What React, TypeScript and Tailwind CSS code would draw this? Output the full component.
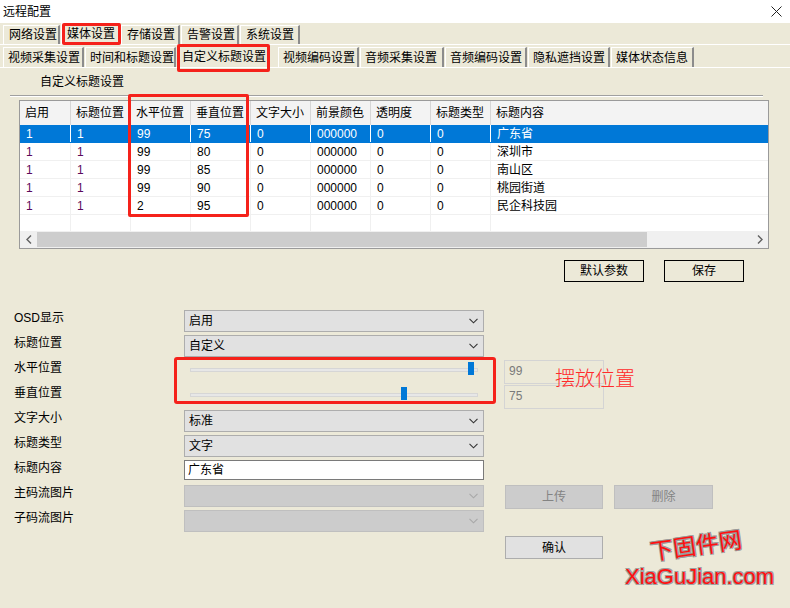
import React from "react";

// Remote config dialog — custom OSD title page

const topTabs = [
  { label: "网络设置", w: "w-[57px]" },
  { label: "媒体设置", w: "w-[59px]", active: true },
  { label: "存储设置", w: "w-[59px]" },
  { label: "告警设置", w: "w-[58px]" },
  { label: "系统设置", w: "w-[60px]" },
];

const subTabs = [
  { label: "视频采集设置", w: "w-[81px]" },
  { label: "时间和标题设置", w: "w-[91px]" },
  { label: "自定义标题设置", w: "w-[92px]", active: true },
  { label: "视频编码设置", w: "w-[81px]" },
  { label: "音频采集设置", w: "w-[84px]" },
  { label: "音频编码设置", w: "w-[82px]" },
  { label: "隐私遮挡设置", w: "w-[82px]" },
  { label: "媒体状态信息", w: "w-[83px]" },
];

const columns = ["启用", "标题位置", "水平位置", "垂直位置", "文字大小", "前景颜色", "透明度", "标题类型", "标题内容"];

const rows = [
  ["1", "1", "99", "75", "0", "000000", "0", "0", "广东省"],
  ["1", "1", "99", "80", "0", "000000", "0", "0", "深圳市"],
  ["1", "1", "99", "85", "0", "000000", "0", "0", "南山区"],
  ["1", "1", "99", "90", "0", "000000", "0", "0", "桃园街道"],
  ["1", "1", "2", "95", "0", "000000", "0", "0", "民企科技园"],
];

const gridCols = "grid grid-cols-[51px_60px_60px_60px_60px_60px_60px_60px_1fr]";

function Chevron({ color = "#333" }: { color?: string }) {
  return (
    <svg width="9" height="6" viewBox="0 0 9 6" className="shrink-0">
      <polyline points="0.5,0.8 4.5,4.8 8.5,0.8" fill="none" stroke={color} strokeWidth="1.1" />
    </svg>
  );
}

function Select({ value, disabled }: { value?: string; disabled?: boolean }) {
  return (
    <div
      className={`w-[300px] h-[22px] flex items-center justify-between pl-[4px] pr-[5px] border ${
        disabled ? "bg-[#cccccc] border-[#bfbfbf]" : "bg-[#e1e1e1] border-[#adadad]"
      }`}
    >
      <span className="text-black">{value}</span>
      <Chevron color={disabled ? "#a8a8a8" : "#333"} />
    </div>
  );
}

function Slider({ value }: { value: number }) {
  return (
    <div className="w-[300px] h-[25px] pl-[6px] pt-[8px]">
      <div className="relative w-[288px] h-[4px] bg-[#e7e7e7] border border-[#d6d6d6]">
        <div
          className="absolute top-[-7px] w-[6px] h-[13px] bg-[#0078d7]"
          style={{ left: `${(value / 100) * 280}px` }}
        />
      </div>
    </div>
  );
}

function Label({ children }: { children: React.ReactNode }) {
  return <div className="w-[170px] leading-[16px] text-black">{children}</div>;
}

export default function App() {
  return (
    <div
      className="relative w-[790px] h-[608px] overflow-hidden bg-[#ECE9D8] text-[12px] text-black"
      style={{ fontFamily: '"Liberation Sans", "Noto Sans CJK SC", sans-serif' }}
    >
      {/* ── Title bar ───────────────────────────────────────── */}
      <div className="h-[23px] bg-white flex items-center justify-between pl-[3px] pr-[8px]">
        <span className="leading-[14px]">远程配置</span>
        <svg width="11" height="11" viewBox="0 0 11 11">
          <path d="M0.5 0.5 L10.5 10.5 M10.5 0.5 L0.5 10.5" stroke="#222" strokeWidth="1" />
        </svg>
      </div>

      {/* ── Top tabs ────────────────────────────────────────── */}
      <div className="h-[22px] flex items-end pl-[3px] gap-[1px] border-b border-white">
        {topTabs.map((t) => (
          <div
            key={t.label}
            className={`${t.w} ${t.active ? "h-[21px]" : "h-[19px]"} flex items-center pl-[5px] border-l border-t border-white border-r-2 border-r-[#8c8c8c] leading-[14px]`}
          >
            {t.label}
          </div>
        ))}
      </div>

      {/* ── Sub tabs ────────────────────────────────────────── */}
      <div className="h-[23px] flex items-end pl-[3px] gap-[1px] border-b border-white">
        {subTabs.map((t) => (
          <div
            key={t.label}
            className={`${t.w} ${t.active ? "h-[22px]" : "h-[20px]"} ${t.active ? "mr-[8px]" : ""} flex items-center pl-[4px] border-l border-t border-white border-r-2 border-r-[#8c8c8c] leading-[14px]`}
          >
            {t.label}
          </div>
        ))}
      </div>

      {/* ── Group caption ───────────────────────────────────── */}
      <div className="pl-[40px] pt-[7px] leading-[14px]">自定义标题设置</div>
      <div className="ml-[10px] mt-[6px] w-[753px] border-t border-[#a0a0a0] border-b border-b-white" />

      {/* ── List view ───────────────────────────────────────── */}
      <div className="ml-[19px] mt-[3px] w-[750px] border border-[#9a9a9a] bg-white">
        <div className={`${gridCols} h-[24px] bg-[#f3f3f3]`}>
          {columns.map((c, i) => (
            <div
              key={c}
              className={`flex items-center pl-[5px] leading-[14px] ${i < columns.length - 1 ? "border-r border-[#d6d6d6]" : ""}`}
            >
              {c}
            </div>
          ))}
        </div>
        {rows.map((r, ri) => {
          const sel = ri === 0;
          return (
            <div
              key={ri}
              className={`${gridCols} h-[18px] border-b ${sel ? "bg-[#0078d7] text-white border-[#0078d7]" : "border-[#f0f0f0]"}`}
            >
              {r.map((v, ci) => (
                <div
                  key={ci}
                  className={`flex items-center pl-[6px] leading-[14px] ${
                    ci < r.length - 1 ? (sel ? "border-r border-white" : "border-r border-[#f0f0f0]") : ""
                  } ${!sel && ci < 2 ? "text-[#5c0a5c]" : ""}`}
                >
                  {v}
                </div>
              ))}
            </div>
          );
        })}
        <div className={`${gridCols} h-[16px]`}>
          {columns.map((c, i) => (
            <div key={c} className={i < columns.length - 1 ? "border-r border-[#f0f0f0]" : ""} />
          ))}
        </div>
        {/* horizontal scrollbar */}
        <div className="h-[17px] flex bg-[#f0f0f0]">
          <div className="w-[17px] flex items-center justify-center">
            <svg width="6" height="9" viewBox="0 0 6 9">
              <polyline points="5,0.5 1,4.5 5,8.5" fill="none" stroke="#606060" strokeWidth="1.4" />
            </svg>
          </div>
          <div className="w-[610px] my-[1px] bg-[#cdcdcd]" />
          <div className="flex-1" />
          <div className="w-[17px] flex items-center justify-center">
            <svg width="6" height="9" viewBox="0 0 6 9">
              <polyline points="1,0.5 5,4.5 1,8.5" fill="none" stroke="#606060" strokeWidth="1.4" />
            </svg>
          </div>
        </div>
      </div>

      {/* ── Action buttons ──────────────────────────────────── */}
      <div className="mt-[11px] ml-[564px] flex gap-[20px]">
        <button className="w-[80px] h-[22px] border border-black flex items-center justify-center leading-[14px]">
          默认参数
        </button>
        <button className="w-[80px] h-[22px] border border-black flex items-center justify-center leading-[14px]">
          保存
        </button>
      </div>

      {/* ── Form ────────────────────────────────────────────── */}
      <div className="mt-[28px] pl-[14px] flex flex-col">
        <div className="h-[25px] flex">
          <Label>OSD显示</Label>
          <Select value="启用" />
        </div>
        <div className="h-[25px] flex">
          <Label>标题位置</Label>
          <Select value="自定义" />
        </div>
        <div className="h-[25px] flex">
          <Label>水平位置</Label>
          <Slider value={99} />
          <div className="ml-[20px] w-[100px] h-[24px] border border-[#d4d4d4] pl-[4px] pt-[3px] text-[#7a7a7a] leading-[14px]">
            99
          </div>
        </div>
        <div className="h-[25px] flex">
          <Label>垂直位置</Label>
          <Slider value={75} />
          <div className="ml-[20px] w-[100px] h-[24px] border border-[#d4d4d4] pl-[4px] pt-[3px] text-[#7a7a7a] leading-[14px]">
            75
          </div>
        </div>
        <div className="h-[25px] flex">
          <Label>文字大小</Label>
          <Select value="标准" />
        </div>
        <div className="h-[25px] flex">
          <Label>标题类型</Label>
          <Select value="文字" />
        </div>
        <div className="h-[25px] flex">
          <Label>标题内容</Label>
          <div className="w-[300px] h-[20px] bg-white border border-[#7a7a7a] pl-[3px] flex items-center">广东省</div>
        </div>
        <div className="h-[25px] flex">
          <Label>主码流图片</Label>
          <Select disabled />
          <button className="ml-[21px] w-[98px] h-[24px] bg-[#cccccc] border border-[#bfbfbf] text-[#838383] flex items-center justify-center">
            上传
          </button>
          <button className="ml-[11px] w-[99px] h-[24px] bg-[#cccccc] border border-[#bfbfbf] text-[#838383] flex items-center justify-center">
            删除
          </button>
        </div>
        <div className="h-[25px] flex">
          <Label>子码流图片</Label>
          <Select disabled />
        </div>
        <button className="mt-[1px] ml-[491px] w-[98px] h-[23px] bg-[#e1e1e1] border border-[#adadad] flex items-center justify-center">
          确认
        </button>
      </div>

      {/* ── Annotations (overlays) ──────────────────────────── */}
      <div className="absolute left-[62px] top-[23px] w-[59px] h-[22px] border-[3px] border-[#f5221b] rounded-[2px]" />
      <div className="absolute left-[177px] top-[44px] w-[93px] h-[28px] border-[3px] border-[#f5221b] rounded-[2px]" />
      <div className="absolute left-[128px] top-[94px] w-[121px] h-[123px] border-[3px] border-[#f5221b] rounded-[2px]" />
      <div className="absolute left-[174px] top-[357px] w-[322px] h-[47px] border-[3px] border-[#f5221b] rounded-[3px]" />
      <div className="absolute left-[555px] top-[367px] text-[20px] leading-[24px] font-light text-[#ff2a2a]">摆放位置</div>

      {/* ── Watermark ───────────────────────────────────────── */}
      <div
        className="absolute left-[650px] top-[531px] text-[23px] leading-[30px] text-[#ff1010] rotate-[-8deg]"
        style={{ textShadow: "1px 1px 0 #9a9a9a, -1px -1px 0 #9a9a9a, 1px -1px 0 #9a9a9a, -1px 1px 0 #9a9a9a" }}
      >
        下固件网
      </div>
      <div
        className="absolute left-[625px] top-[564px] text-[22px] leading-[26px] text-[#ff1010]"
        style={{
          textShadow: "1px 1px 0 #a0a0a0, -1px -1px 0 #a0a0a0, 1px -1px 0 #a0a0a0, -1px 1px 0 #a0a0a0",
        }}
      >
        XiaGuJian.com
      </div>
    </div>
  );
}
